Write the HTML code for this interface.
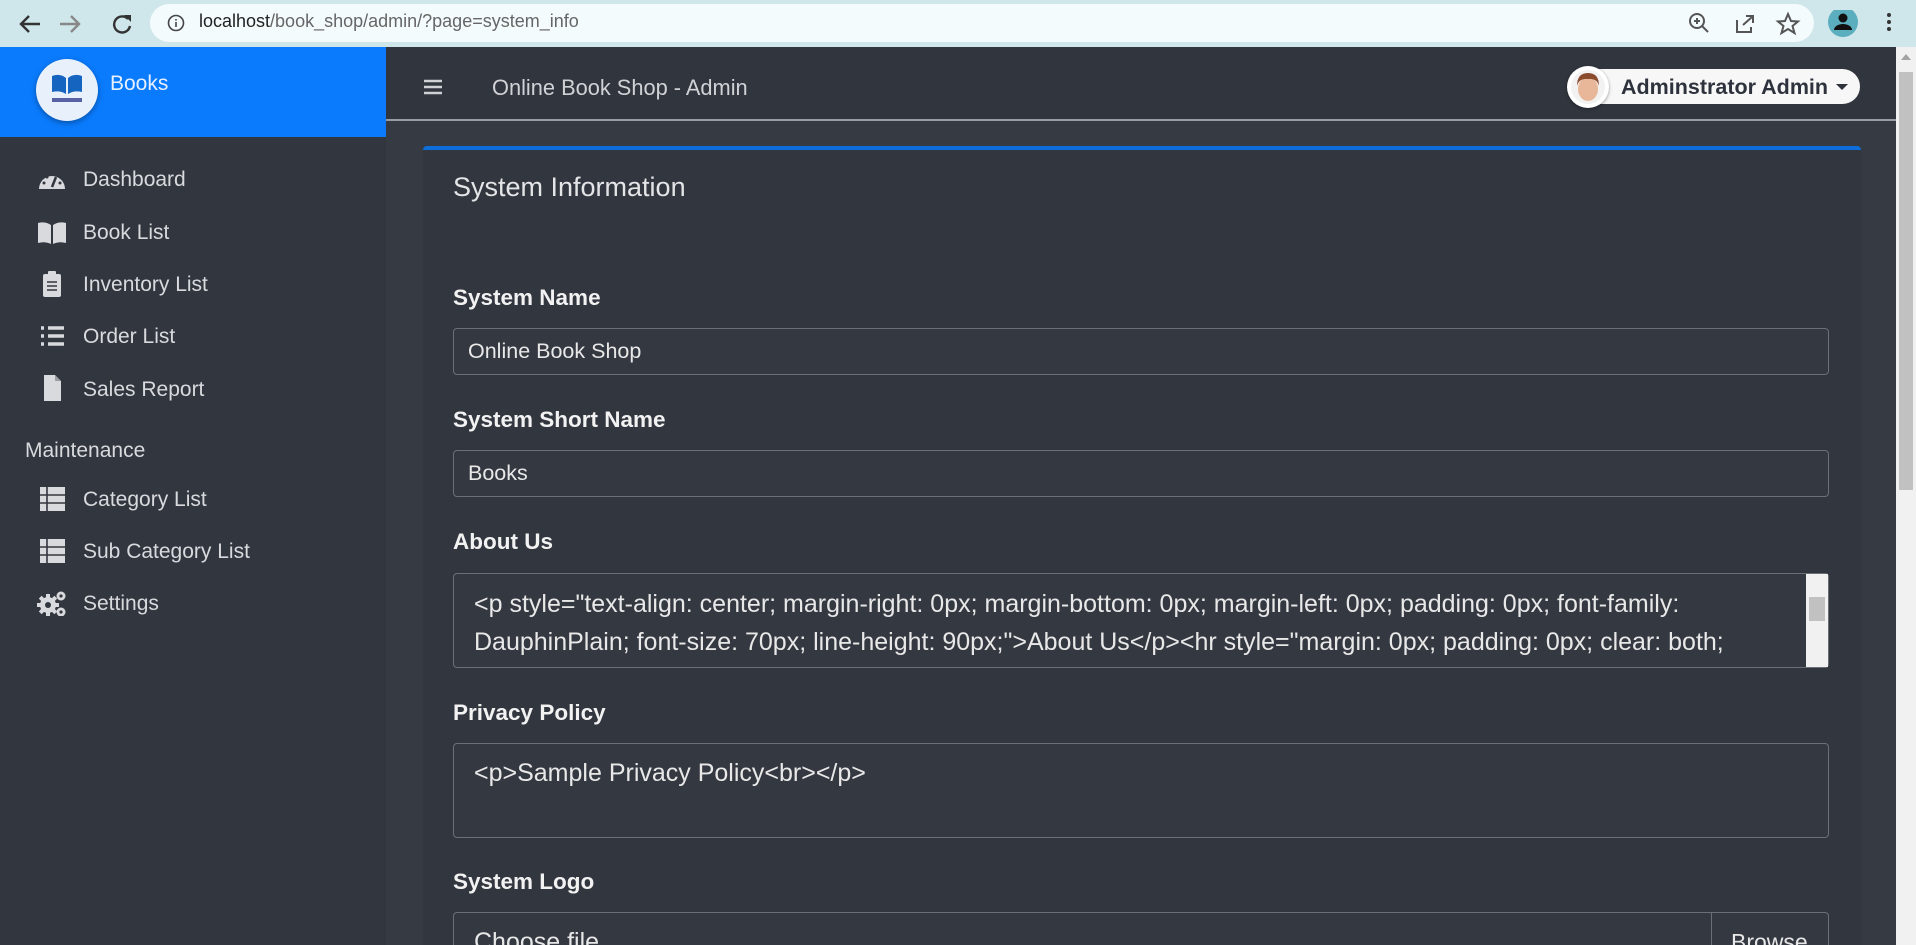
<!DOCTYPE html>
<html style="width:1916px;height:945px;overflow:hidden"><head><meta charset="utf-8"><style>
*{box-sizing:border-box;margin:0;padding:0}
body{width:1916px;height:945px;overflow:hidden;background:#343a40;font-family:"Liberation Sans",sans-serif;position:relative}
.abs{position:absolute}
.chrome{left:0;top:0;width:1916px;height:47px;background:#cfe7eb}
.url{left:150px;top:4px;width:1664px;height:38px;border-radius:19px;background:#f4fbfc}
.side{left:0;top:47px;width:386px;height:898px;background:#32363f}
.brand{left:0;top:47px;width:386px;height:90px;background:#0a7bfd}
.nav{left:386px;top:47px;width:1510px;height:74px;background:#31353e;border-bottom:2px solid #9a9ea4}
.main{left:386px;top:121px;width:1510px;height:824px;background:#353a43}
.card{left:423px;top:146px;width:1438px;height:799px;background:#32363f;border-top:4px solid #0d6edb;border-radius:4px 4px 0 0}
.item{position:absolute;left:83px;color:#d8dadd;font-size:21px}
.ic{position:absolute;left:37px;width:30px;height:26px}
.lbl{position:absolute;left:453px;color:#f2f2f2;font-weight:bold;font-size:22.5px}
.inp{position:absolute;left:453px;width:1376px;border:1px solid #6b6f76;border-radius:4px;background:#343841;color:#e8e8e8;font-size:21.5px;padding-left:14px}
.sb{left:1896px;top:47px;width:20px;height:898px;background:#f1f1f1}
</style></head><body>
<div class="abs chrome"></div>
<div class="abs url"></div>
<svg class="abs" style="left:16px;top:10px" width="150" height="28" viewBox="0 0 150 28">
<path d="M24 14H6M13 6L5 14l8 8" stroke="#333" stroke-width="2.4" fill="none"/>
<path d="M62 14H44M55 6l8 8-8 8" stroke="#888" stroke-width="2.4" fill="none"/>
<path d="M112 9a8 8 0 1 0 2 7" stroke="#333" stroke-width="2.4" fill="none"/><path d="M108 5h7v7z" fill="#333"/>
</svg>
<svg class="abs" style="left:167px;top:14px" width="18" height="18"><circle cx="9" cy="9" r="7.5" stroke="#444" stroke-width="1.6" fill="none"/><rect x="8.2" y="8" width="1.6" height="5" fill="#444"/><rect x="8.2" y="5" width="1.6" height="1.6" fill="#444"/></svg>
<div class="abs" style="left:199px;top:11px;font-size:18px;color:#222">localhost<span style="color:#666">/book_shop/admin/?page=system_info</span></div>
<svg class="abs" style="left:1685px;top:10px" width="230" height="28">
<circle cx="12" cy="11" r="7" stroke="#555" stroke-width="2" fill="none"/><path d="M17 16l6 6M9 11h6M12 8v6" stroke="#555" stroke-width="2"/>
<path d="M52 10v12h14v-5M58 15l9-8M61 6h7v7" stroke="#555" stroke-width="2" fill="none"/>
<path d="M103 4l3 7 7 .5-5.5 4.5 2 7-6.5-4-6.5 4 2-7-5.5-4.5 7-.5z" stroke="#555" stroke-width="2" fill="none"/>
<circle cx="158" cy="12" r="15" fill="#5aaebd"/><circle cx="158" cy="8" r="4.5" fill="#111"/><path d="M149 20a9 6 0 0 1 18 0z" fill="#111"/>
<circle cx="204" cy="5" r="2" fill="#333"/><circle cx="204" cy="12" r="2" fill="#333"/><circle cx="204" cy="19" r="2" fill="#333"/>
</svg>

<div class="abs side"></div>
<div class="abs brand"></div>
<div class="abs" style="left:36px;top:59px;width:62px;height:62px;border-radius:50%;background:#e8f0fb;box-shadow:0 2px 6px rgba(0,0,0,.35)"></div>
<svg class="abs" style="left:48px;top:68px" width="38" height="40"><path d="M4 8q8-3 14 2v16q-6-4-14-2zM34 8q-8-3-14 2v16q6-4 14-2z" fill="#1565c0"/><rect x="4" y="30" width="30" height="4" fill="#1a237e" opacity=".7"/></svg>
<div class="abs" style="left:110px;top:72px;color:#e6f0ff;font-size:21px">Books</div>

<svg class="ic" style="top:167px" viewBox="0 0 30 26"><path d="M2 22a13 13 0 1 1 26 0z" fill="#d8dadd"/><path d="M15 20l4-10" stroke="#32363f" stroke-width="2.5"/><circle cx="7" cy="16" r="1.5" fill="#32363f"/><circle cx="23" cy="16" r="1.5" fill="#32363f"/><circle cx="10" cy="10" r="1.5" fill="#32363f"/></svg>
<div class="item" style="top:168px">Dashboard</div>
<svg class="ic" style="top:220px" viewBox="0 0 30 26"><path d="M1 3q7-2 13 2v19q-6-3-13-1zM29 3q-7-2-13 2v19q6-3 13-1z" fill="#d8dadd"/></svg>
<div class="item" style="top:221px">Book List</div>
<svg class="ic" style="top:271px" viewBox="0 0 30 26"><rect x="6" y="3" width="18" height="23" rx="2" fill="#d8dadd"/><rect x="11" y="0" width="8" height="5" rx="1" fill="#d8dadd"/><path d="M10 11h10M10 15h10M10 19h10" stroke="#32363f" stroke-width="1.5"/></svg>
<div class="item" style="top:273px">Inventory List</div>
<svg class="ic" style="top:323px" viewBox="0 0 30 26"><path d="M4 5h3M11 5h16M4 13h3M11 13h16M4 21h3M11 21h16" stroke="#d8dadd" stroke-width="3.5"/></svg>
<div class="item" style="top:325px">Order List</div>
<svg class="ic" style="top:375px" viewBox="0 0 30 26"><path d="M7 0h11l6 6v20H7z" fill="#d8dadd"/><path d="M18 0v6h6" fill="#9a9da2"/></svg>
<div class="item" style="top:378px">Sales Report</div>
<div class="abs" style="left:25px;top:439px;color:#d8dadd;font-size:21px">Maintenance</div>
<svg class="ic" style="top:486px" viewBox="0 0 30 26"><rect x="3" y="1" width="25" height="24" fill="#d8dadd"/><path d="M3 9h25M3 17h25M10 1v24" stroke="#32363f" stroke-width="1.6"/></svg>
<div class="item" style="top:488px">Category List</div>
<svg class="ic" style="top:538px" viewBox="0 0 30 26"><rect x="3" y="1" width="25" height="24" fill="#d8dadd"/><path d="M3 9h25M3 17h25M10 1v24" stroke="#32363f" stroke-width="1.6"/></svg>
<div class="item" style="top:540px">Sub Category List</div>
<svg class="ic" style="top:590px" viewBox="0 0 30 26"><g fill="#d8dadd"><circle cx="11" cy="15" r="8"/><rect x="9" y="4" width="4" height="22"/><rect x="0" y="13" width="22" height="4"/><rect x="9" y="4" width="4" height="22" transform="rotate(45 11 15)"/><rect x="9" y="4" width="4" height="22" transform="rotate(-45 11 15)"/><circle cx="24" cy="6" r="4.5"/><circle cx="24" cy="22" r="4.5"/></g><circle cx="11" cy="15" r="3" fill="#32363f"/><circle cx="24" cy="6" r="1.6" fill="#32363f"/><circle cx="24" cy="22" r="1.6" fill="#32363f"/></svg>
<div class="item" style="top:592px">Settings</div>

<div class="abs nav"></div>
<svg class="abs" style="left:424px;top:79px" width="18" height="16"><path d="M0 2h18M0 8h18M0 14h18" stroke="#cfd1d4" stroke-width="2.6"/></svg>
<div class="abs" style="left:492px;top:75px;color:#d0d2d5;font-size:21.8px">Online Book Shop - Admin</div>
<div class="abs" style="left:1580px;top:69px;width:280px;height:35px;border-radius:18px;background:#f7f7f7"></div>
<div class="abs" style="left:1567px;top:66px;width:42px;height:42px;border-radius:50%;background:#fff;box-shadow:0 1px 3px rgba(0,0,0,.4)"></div>
<svg class="abs" style="left:1571px;top:70px" width="34" height="34"><circle cx="17" cy="17" r="17" fill="#f2f2f2"/><ellipse cx="17" cy="19" rx="10" ry="12" fill="#e8b799"/><path d="M6 16q0-13 11-13t11 13q-2-8-11-7q-9-1-11 7z" fill="#8a4a2e"/></svg>
<div class="abs" style="left:1621px;top:75px;color:#2d323c;font-size:21.5px;font-weight:bold">Adminstrator Admin</div>
<svg class="abs" style="left:1836px;top:84px" width="12" height="7"><path d="M0 0h12L6 6z" fill="#2d323c"/></svg>

<div class="abs main"></div>
<div class="abs card"></div>
<div class="abs" style="left:453px;top:172px;color:#e4e5e7;font-size:27px">System Information</div>

<div class="lbl" style="top:285px">System Name</div>
<div class="inp" style="top:328px;height:47px;line-height:45px">Online Book Shop</div>
<div class="lbl" style="top:407px">System Short Name</div>
<div class="inp" style="top:450px;height:47px;line-height:45px">Books</div>
<div class="lbl" style="top:529px">About Us</div>
<div class="inp" style="top:573px;height:95px;overflow:hidden;padding:11px 30px 0 20px;line-height:38px;font-size:25px;white-space:nowrap">&lt;p style="text-align: center; margin-right: 0px; margin-bottom: 0px; margin-left: 0px; padding: 0px; font-family:<br>DauphinPlain; font-size: 70px; line-height: 90px;"&gt;About Us&lt;/p&gt;&lt;hr style="margin: 0px; padding: 0px; clear: both;<br>border-top: 0px; height: 1px; background-image: linear-gradient(to right, rgba(0,0,0,0), rgba(0,0,0,0.75)</div>
<div class="abs" style="left:1806px;top:574px;width:22px;height:93px;background:#f1f1f1"></div>
<div class="abs" style="left:1809px;top:597px;width:16px;height:24px;background:#c1c1c1"></div>
<div class="lbl" style="top:700px">Privacy Policy</div>
<div class="inp" style="top:743px;height:95px;padding:15px 20px;font-size:25px">&lt;p&gt;Sample Privacy Policy&lt;br&gt;&lt;/p&gt;</div>
<div class="lbl" style="top:869px">System Logo</div>
<div class="inp" style="top:912px;height:33px;padding:15px 20px 0;font-size:25px;overflow:hidden;border-bottom:none;border-radius:4px 4px 0 0">Choose file</div>
<div class="abs" style="left:1711px;top:913px;width:117px;height:32px;border-left:1px solid #6b6f76;color:#e8e8e8;font-size:23px;padding:16px 0 0 19px;overflow:hidden">Browse</div>

<div class="abs sb"></div>
<div class="abs" style="left:1899px;top:72px;width:14px;height:418px;background:#c1c1c1"></div>
<svg class="abs" style="left:1901px;top:54px" width="10" height="7"><path d="M0 6h10L5 0z" fill="#a3a3a3"/></svg>
</body></html>
